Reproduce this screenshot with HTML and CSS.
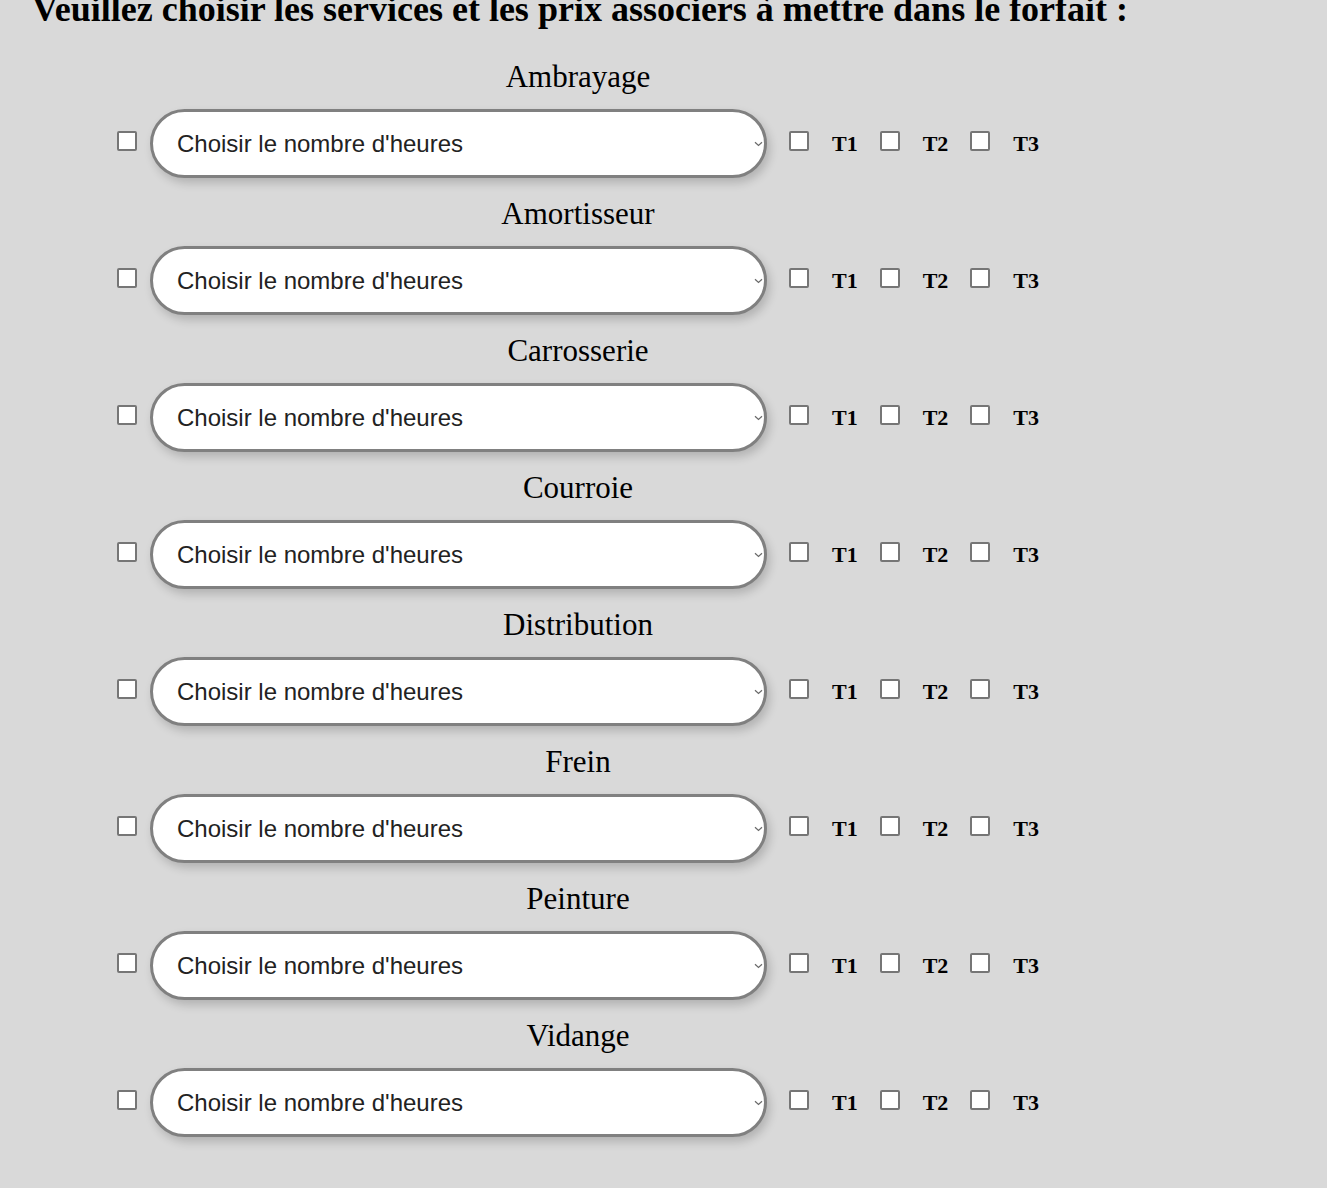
FILE: index.html
```html
<!DOCTYPE html>
<html lang="fr">
<head>
<meta charset="utf-8">
<title>Forfait</title>
<link rel="stylesheet" href="styles.css">
</head>
<body>
<h1 class="title">Veuillez choisir les services et les prix associers à mettre dans le forfait :</h1>
<div class="services">
  <div class="service">
    <div class="service-name">Ambrayage</div>
    <div class="service-row">
      <input type="checkbox" class="box">
      <span class="select-wrap"><select class="hours"><option>Choisir le nombre d'heures</option></select><svg class="chev" width="9" height="6" viewBox="0 0 9 6"><path d="M1 1.2 L4.5 4.5 L8 1.2" fill="none" stroke="#6a6a6a" stroke-width="1.2"/></svg></span>
      <input type="checkbox" class="box"><span class="tier">T1</span>
      <input type="checkbox" class="box"><span class="tier">T2</span>
      <input type="checkbox" class="box"><span class="tier">T3</span>
    </div>
  </div>
  <div class="service">
    <div class="service-name">Amortisseur</div>
    <div class="service-row">
      <input type="checkbox" class="box">
      <span class="select-wrap"><select class="hours"><option>Choisir le nombre d'heures</option></select><svg class="chev" width="9" height="6" viewBox="0 0 9 6"><path d="M1 1.2 L4.5 4.5 L8 1.2" fill="none" stroke="#6a6a6a" stroke-width="1.2"/></svg></span>
      <input type="checkbox" class="box"><span class="tier">T1</span>
      <input type="checkbox" class="box"><span class="tier">T2</span>
      <input type="checkbox" class="box"><span class="tier">T3</span>
    </div>
  </div>
  <div class="service">
    <div class="service-name">Carrosserie</div>
    <div class="service-row">
      <input type="checkbox" class="box">
      <span class="select-wrap"><select class="hours"><option>Choisir le nombre d'heures</option></select><svg class="chev" width="9" height="6" viewBox="0 0 9 6"><path d="M1 1.2 L4.5 4.5 L8 1.2" fill="none" stroke="#6a6a6a" stroke-width="1.2"/></svg></span>
      <input type="checkbox" class="box"><span class="tier">T1</span>
      <input type="checkbox" class="box"><span class="tier">T2</span>
      <input type="checkbox" class="box"><span class="tier">T3</span>
    </div>
  </div>
  <div class="service">
    <div class="service-name">Courroie</div>
    <div class="service-row">
      <input type="checkbox" class="box">
      <span class="select-wrap"><select class="hours"><option>Choisir le nombre d'heures</option></select><svg class="chev" width="9" height="6" viewBox="0 0 9 6"><path d="M1 1.2 L4.5 4.5 L8 1.2" fill="none" stroke="#6a6a6a" stroke-width="1.2"/></svg></span>
      <input type="checkbox" class="box"><span class="tier">T1</span>
      <input type="checkbox" class="box"><span class="tier">T2</span>
      <input type="checkbox" class="box"><span class="tier">T3</span>
    </div>
  </div>
  <div class="service">
    <div class="service-name">Distribution</div>
    <div class="service-row">
      <input type="checkbox" class="box">
      <span class="select-wrap"><select class="hours"><option>Choisir le nombre d'heures</option></select><svg class="chev" width="9" height="6" viewBox="0 0 9 6"><path d="M1 1.2 L4.5 4.5 L8 1.2" fill="none" stroke="#6a6a6a" stroke-width="1.2"/></svg></span>
      <input type="checkbox" class="box"><span class="tier">T1</span>
      <input type="checkbox" class="box"><span class="tier">T2</span>
      <input type="checkbox" class="box"><span class="tier">T3</span>
    </div>
  </div>
  <div class="service">
    <div class="service-name">Frein</div>
    <div class="service-row">
      <input type="checkbox" class="box">
      <span class="select-wrap"><select class="hours"><option>Choisir le nombre d'heures</option></select><svg class="chev" width="9" height="6" viewBox="0 0 9 6"><path d="M1 1.2 L4.5 4.5 L8 1.2" fill="none" stroke="#6a6a6a" stroke-width="1.2"/></svg></span>
      <input type="checkbox" class="box"><span class="tier">T1</span>
      <input type="checkbox" class="box"><span class="tier">T2</span>
      <input type="checkbox" class="box"><span class="tier">T3</span>
    </div>
  </div>
  <div class="service">
    <div class="service-name">Peinture</div>
    <div class="service-row">
      <input type="checkbox" class="box">
      <span class="select-wrap"><select class="hours"><option>Choisir le nombre d'heures</option></select><svg class="chev" width="9" height="6" viewBox="0 0 9 6"><path d="M1 1.2 L4.5 4.5 L8 1.2" fill="none" stroke="#6a6a6a" stroke-width="1.2"/></svg></span>
      <input type="checkbox" class="box"><span class="tier">T1</span>
      <input type="checkbox" class="box"><span class="tier">T2</span>
      <input type="checkbox" class="box"><span class="tier">T3</span>
    </div>
  </div>
  <div class="service">
    <div class="service-name">Vidange</div>
    <div class="service-row">
      <input type="checkbox" class="box">
      <span class="select-wrap"><select class="hours"><option>Choisir le nombre d'heures</option></select><svg class="chev" width="9" height="6" viewBox="0 0 9 6"><path d="M1 1.2 L4.5 4.5 L8 1.2" fill="none" stroke="#6a6a6a" stroke-width="1.2"/></svg></span>
      <input type="checkbox" class="box"><span class="tier">T1</span>
      <input type="checkbox" class="box"><span class="tier">T2</span>
      <input type="checkbox" class="box"><span class="tier">T3</span>
    </div>
  </div>
</div>
</body>
</html>
```
FILE: styles.css
```css
html, body {
  background: #d9d9d9;
}
body {
  margin: 0 8px;
  font-family: "Liberation Serif", "Times New Roman", serif;
  color: #000;
}
.title {
  margin: -11px 0 0 24px;
  font-size: 36px;
  font-weight: bold;
  line-height: 41px;
  white-space: nowrap;
}
.services {
  width: 1140px;
  display: flex;
  flex-direction: column;
  align-items: center;
  padding-top: 29px;
}
.service {
  display: flex;
  flex-direction: column;
  align-items: center;
  margin-bottom: 18px;
}
.service-name {
  font-size: 31px;
  line-height: 36px;
  margin-bottom: 14px;
}
.service-row {
  display: flex;
  align-items: center;
}
.box {
  appearance: none;
  -webkit-appearance: none;
  width: 20px;
  height: 20px;
  margin: 0 0 5px 0;
  border: 2px solid #767676;
  border-radius: 2px;
  background: #fff;
  box-sizing: border-box;
}
.select-wrap {
  position: relative;
  display: block;
  margin: 0 22px 0 13px;
}
.hours {
  display: block;
  appearance: none;
  -webkit-appearance: none;
  width: 617px;
  height: 69px;
  margin: 0;
  padding: 0 24px 0 24px;
  border: 3px solid #808080;
  border-radius: 35px;
  background: #fff;
  box-shadow: 3px 5px 10px rgba(0, 0, 0, 0.18);
  font-family: "Liberation Sans", Arial, sans-serif;
  font-size: 24px;
  color: #222;
  box-sizing: border-box;
}
.chev {
  position: absolute;
  right: 4px;
  top: 32px;
  pointer-events: none;
}
.tier {
  font-size: 22px;
  font-weight: bold;
  margin: 0 22px 0 23px;
}
.tier:last-child {
  margin-right: 0;
}
```
